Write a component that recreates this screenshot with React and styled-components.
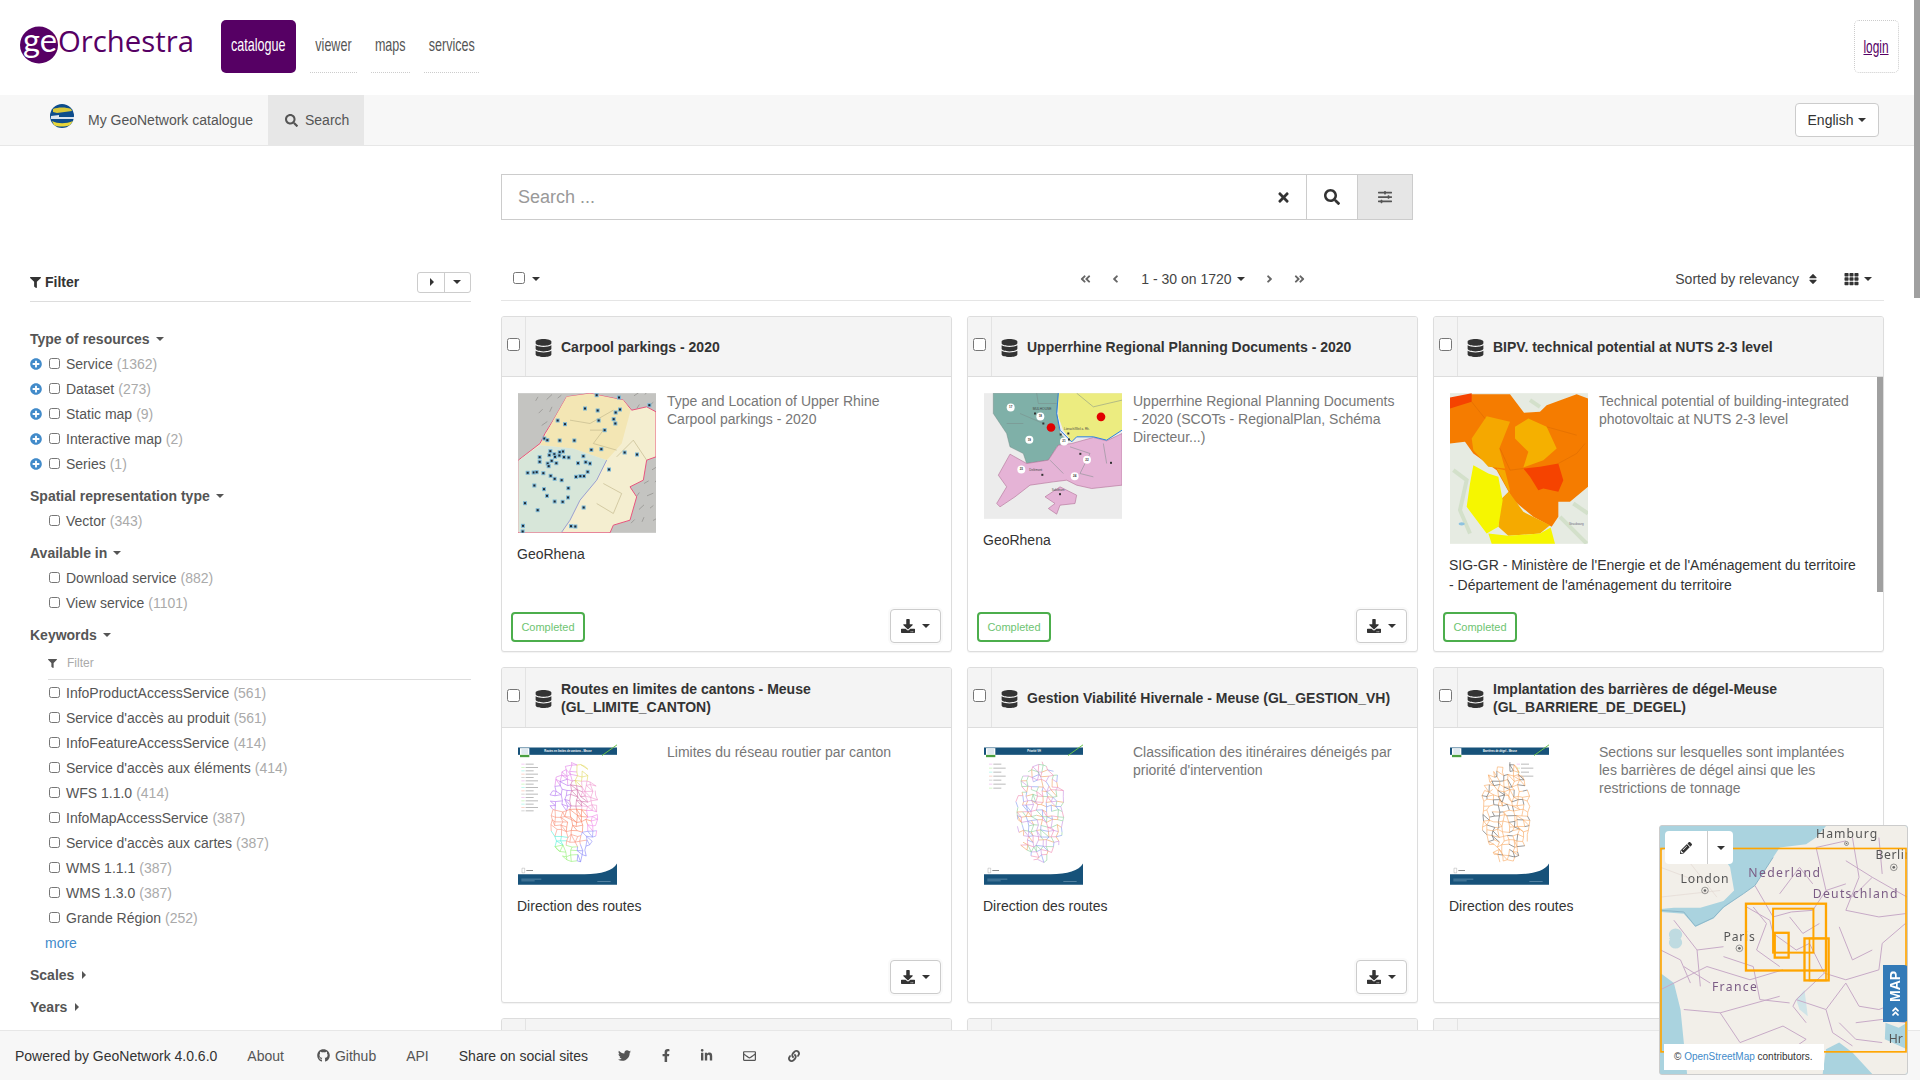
import React from "react";
import styled, { createGlobalStyle } from "styled-components";
import {
  FaAngleDoubleLeft, FaAngleDoubleRight, FaAngleDoubleDown, FaAngleLeft, FaAngleRight, FaDatabase, FaDownload,
  FaFacebookF, FaFilter, FaGithub, FaLink, FaLinkedinIn, FaPencilAlt, FaPlusCircle, FaRegEnvelope, FaSearch,
  FaSlidersH, FaSort, FaTh, FaTimes, FaTwitter,
} from "react-icons/fa";

const Global = createGlobalStyle`
  html, body { margin: 0; padding: 0; height: 100%; overflow: hidden; background: #fff; }
  body { font-family: "Liberation Sans", Arial, sans-serif; font-size: 14px; color: #333; line-height: 20px; }
  * { box-sizing: border-box; }
`;

const Page = styled.div`width: 1914px; height: 1080px; overflow: hidden;`;
const ScrollThumb = styled.div`position: fixed; top: 0; right: 0; width: 6px; height: 298px; background: #a0a0a0;`;

const TopHeader = styled.header`display: flex; align-items: flex-start; height: 95px; padding: 20px 15px 0 20px;`;
const LogoSvg = styled.svg`display: block; width: 180px; height: 56px; flex: none;`;
const TopNav = styled.nav`display: flex; margin-left: 21px; gap: 14px;`;
const TopLink = styled.a`
  display: flex; align-items: center; justify-content: center; height: 53px; padding-bottom: 3px;
  width: ${p => p.$w}px; font-family: "Liberation Sans", sans-serif; font-size: 19px;
  color: ${p => (p.$active ? "#fff" : "#555")};
  background: ${p => (p.$active ? "#560064" : "transparent")};
  border-radius: ${p => (p.$active ? "5px" : "0")};
  border-bottom: ${p => (p.$active ? "none" : "1px dotted #ccc")};
`;
const Squeeze = styled.span`display: inline-block; flex: none; transform: scaleX(.66);`;
const LoginBox = styled.a`
  margin-left: auto; width: 45px; height: 53px; display: flex; align-items: center; justify-content: center;
  border: 1px dotted #ccc; border-radius: 5px; color: #560064; text-decoration: underline;
  font-family: "Liberation Sans", sans-serif; font-size: 18px;
`;

const NavBar = styled.div`
  display: flex; align-items: stretch; height: 51px; background: #f7f7f7; border-bottom: 1px solid #e7e7e7; padding: 0 35px 0 50px;
`;
const Brand = styled.a`display: flex; align-items: center; color: #555; gap: 14px; margin-right: 15px;`;
const GlobeSvg = styled.svg`width: 24px; height: 24px; margin-top: -8px; display: block;`;
const SearchTab = styled.a`
  display: flex; align-items: center; gap: 7px; width: 96px; padding-left: 17px; background: #e7e7e7; color: #555;
`;
const BsButton = styled.button`
  display: inline-flex; align-items: center; justify-content: center; gap: 5px; background: #fff;
  border: 1px solid #ccc; border-radius: 4px; font: 14px "Liberation Sans", sans-serif; color: #333; padding: 0;
`;
const LangButton = styled(BsButton)`margin: 8px 0 0 auto; width: 84px; height: 34px;`;
const Caret = styled.i`
  display: inline-block; width: 0; height: 0; flex: none; border-left: 4px solid transparent; border-right: 4px solid transparent;
  border-top: 4px solid ${p => p.$c || "#333"};
`;
const CaretR = styled.i`
  display: inline-block; width: 0; height: 0; flex: none; border-top: 4px solid transparent; border-bottom: 4px solid transparent;
  border-left: 4px solid ${p => p.$c || "#333"}; margin-left: 2px;
`;

const Main = styled.main`display: flex; gap: 30px; padding: 28px 30px 0;`;
const Aside = styled.aside`width: 441px; flex: none; padding-top: 97px; color: #555;`;
const FilterHead = styled.div`
  display: flex; align-items: center; justify-content: space-between; height: 31px; padding-bottom: 8px; border-bottom: 1px solid #ddd;
  font-weight: bold; color: #333;
`;
const FilterTitle = styled.span`display: flex; align-items: center; gap: 4px;`;
const MiniGroup = styled.div`display: flex; width: 54px; height: 21px; border: 1px solid #ccc; border-radius: 3px;`;
const MiniBtn = styled.span`
  flex: 1; display: flex; align-items: center; justify-content: center;
  & + & { border-left: 1px solid #ccc; }
`;
const Heading = styled.div`
  display: flex; align-items: center; gap: 6px; height: 25px; font-weight: bold; color: #555;
  margin-top: ${p => p.$first ? 24 : 7}px;
`;
const FacetRow = styled.div`display: flex; align-items: center; height: 25px; padding-left: ${p => p.$plus ? 0 : 19}px;`;
const PlusIcon = styled(FaPlusCircle)`width: 12px; height: 12px; color: #428bca; margin-right: 7px; flex: none;`;
const SmallCheck = styled.input.attrs({ type: "checkbox" })`width: 11px; height: 11px; margin: -1px 6px 0 0; flex: none;`;
const Count = styled.span`color: #aaa; margin-left: 4px;`;
const KwFilter = styled.div`
  display: flex; align-items: center; gap: 10px; margin: 2px 0 0 18px; height: 31px; padding-bottom: 2px; border-bottom: 1px solid #ddd;
  font-size: 12px; color: #aaa;
`;
const KwIcon = styled(FaFilter)`width: 9px; height: 9px; color: #555;`;
const MoreLink = styled.a`display: block; height: 24px; line-height: 25px; margin: 1px 0 0 15px; color: #428bca;`;

const Content = styled.section`flex: 1; min-width: 0;`;
const SearchBar = styled.div`display: flex; width: 912px; height: 46px; border: 1px solid #ccc;`;
const SearchInput = styled.input`
  flex: 1; min-width: 0; border: none; outline: none; padding: 0 16px; font: 18px "Liberation Sans", sans-serif; color: #333;
  &::placeholder { color: #999; }
`;
const SearchCell = styled.span`
  display: flex; align-items: center; justify-content: center; flex: none; width: ${p => p.$w}px; color: ${p => p.$fill ? "#555" : "#333"};
  border-left: ${p => p.$line ? "1px solid #ccc" : "none"}; background: ${p => p.$fill ? "#e6e6e6" : "#fff"};
`;
const Toolbar = styled.div`
  display: grid; grid-template-columns: 1fr auto 1fr; align-items: center; height: 39px; margin-top: 42px; padding: 0 12px 4px; border-bottom: 1px solid #e5e5e5;
`;
const ToolLeft = styled.div`display: flex; align-items: center; gap: 7px;`;
const ToolCheck = styled.input.attrs({ type: "checkbox" })`width: 12px; height: 12px; margin: -3px 0 0 0;`;
const Pager = styled.div`display: flex; align-items: center; gap: 19px; color: #444;`;
const PagerIcon = styled.span`display: flex; width: 11px; justify-content: center; color: #666;`;
const PagerText = styled.span`display: flex; align-items: center; gap: 5px; margin-left: 1px;`;
const ToolRight = styled.div`display: flex; align-items: center; justify-content: flex-end; color: #444;`;
const SortIcon = styled(FaSort)`width: 8px; height: 14px; color: #333; margin-left: 10px;`;
const GridIcon = styled(FaTh)`width: 15px; height: 14px; color: #333; margin-left: 27px; margin-right: 5px;`;

const CardGrid = styled.div`display: grid; grid-template-columns: repeat(3, 1fr); column-gap: 15px; row-gap: 15px; margin-top: 15px;`;
const CardBox = styled.article`
  position: relative; display: flex; flex-direction: column; height: 336px; border: 1px solid #ddd; border-radius: 3px;
  box-shadow: 0 1px 1px rgba(0,0,0,.05); background: #fff; overflow: hidden;
`;
const CardHead = styled.div`display: flex; height: 60px; flex: none; background: #f4f4f4; border-bottom: 1px solid #ddd;`;
const CheckCell = styled.div`width: 24px; flex: none; border-right: 1px solid #e3e3e3; padding: 21px 0 0 5px;`;
const CardCheck = styled.input.attrs({ type: "checkbox" })`display: block; width: 13px; height: 13px; margin: 0;`;
const TitleCell = styled.div`display: flex; align-items: center; flex: 1; padding: 0 14px 0 9px; gap: 9px;`;
const DbIcon = styled(FaDatabase)`width: 17px; height: 18px; color: #333; flex: none; margin-top: 2px;`;
const CardTitle = styled.h3`margin: 0; font-size: 14px; line-height: 18px; font-weight: bold; color: #333;`;
const CardBody = styled.div`flex: 1; padding: 16px 17px 0 15px; min-height: 0;`;
const TopPart = styled.div`display: flex; align-items: flex-start; padding-left: 1px;`;
const ThumbCol = styled.div`width: 149px; flex: none;`;
const Desc = styled.p`margin: -1px 0 0; width: 264px; font-size: 14px; line-height: 18px; color: #777;`;
const Author = styled.div`margin-top: 11px; max-width: 412px; line-height: 20px; color: #333;`;
const CardFoot = styled.div`
  display: flex; align-items: flex-end; justify-content: space-between; flex: none; padding: 0 10px 8px 9px; height: 60px;
`;
const Status = styled.span`
  display: inline-flex; align-items: center; justify-content: center; width: 74px; height: 30px; margin-bottom: 1px;
  border: 2px solid #4cae4c; border-radius: 4px; color: #6ec472; font-size: 11px;
`;
const DlButton = styled(BsButton)`margin-left: auto; width: 51px; height: 34px; gap: 7px; box-shadow: 0 0 0 2px #fafafa;`;
const DlIcon = styled(FaDownload)`width: 14px; height: 14px; color: #333;`;
const InnerThumb = styled.div`position: absolute; right: 0; top: 60px; width: 6px; height: 215px; background: #a0a0a0;`;
const ThumbSvg = styled.svg`display: block; width: ${p => p.$w}px; height: ${p => p.$h}px;`;

const Foot = styled.footer`
  position: fixed; left: 0; right: 0; bottom: 0; height: 50px; display: flex; align-items: center; gap: 30px; padding: 0 0 0 15px;
  background: #f7f7f7; border-top: 1px solid #e7e7e7; color: #333;
`;
const FootLink = styled.a`display: flex; align-items: center; gap: 5px; color: #555; margin-left: ${p => p.$ml || 0}px;`;
const FootIcon = styled.a`display: flex; color: #555; width: ${p => p.$w || 14}px; justify-content: center;`;

const MapBox = styled.div`
  position: fixed; left: 1659px; top: 825px; width: 249px; height: 250px; border: 1px solid #ccc; border-radius: 3px; overflow: hidden; background: #aad3df;
`;
const MapSvg = styled.svg`display: block; width: 100%; height: 100%;`;
const EditGroup = styled.div`
  position: absolute; left: 5px; top: 5px; width: 68px; height: 33px; display: flex; background: #fff; border-radius: 4px;
`;
const EditCell = styled.span`
  display: flex; align-items: center; justify-content: center; width: ${p => p.$w}px; flex: none;
  & + & { border-left: 1px solid #ccc; }
`;
const Attribution = styled.div`
  position: absolute; left: 4px; bottom: 4px; width: 160px; height: 26px; display: flex; align-items: center; padding-left: 10px;
  background: #fff; font-size: 10px; color: #333; white-space: pre;
`;
const OsmLink = styled.a`color: #428bca;`;
const MapTab = styled.div`
  position: absolute; right: -1px; top: 139px; width: 25px; height: 57px; background: #337ab7; color: #fff; border-radius: 4px 0 0 4px;
  display: flex; align-items: center; justify-content: center; gap: 4px; font-weight: bold; font-size: 14px;
  writing-mode: vertical-rl; transform: rotate(180deg);
`;

/* ---- drawings ---- */
const Logo = () => (
  <LogoSvg viewBox="0 -6 180 56">
    <ellipse cx="19" cy="19" rx="19" ry="18.5" fill="#560064" />
    <text x="3" y="26" fontFamily="Lato, sans-serif" fontSize="32" fill="#fff" textLength="34" lengthAdjust="spacingAndGlyphs">ge</text>
    <text x="38" y="26" fontFamily="'Open Sans', sans-serif" fontSize="29" fill="#560064" textLength="136" lengthAdjust="spacingAndGlyphs">Orchestra</text>
  </LogoSvg>
);

const Globe = () => (
  <GlobeSvg viewBox="0 0 24 24">
    <circle cx="12" cy="12" r="12" fill="#0d4d8c" />
    <path d="M3 5 C8 3 16 3 21 5 L22 7 L7 9 L3 8Z" fill="#d9c93a" />
    <path d="M1 12 L9 11 L9 13 L24 13 L24 15 L1 15Z" fill="#fff" opacity=".85" />
    <path d="M2 17 C8 20 16 20 23 17 L20 21 C15 23 8 23 4 21Z" fill="#e8d63a" />
  </GlobeSvg>
);

const markers = [[320,45],[387,52],[478,75],[285,85],[323,91],[390,88],[377,97],[203,121],[225,132],[326,121],[371,117],[376,130],[344,150],[163,175],[172,180],[209,181],[253,181],[304,209],[334,207],[404,217],[441,223],[181,213],[193,222],[209,216],[219,214],[178,225],[195,230],[208,226],[222,231],[236,232],[149,231],[149,245],[185,242],[173,250],[176,258],[199,249],[280,228],[264,249],[287,246],[300,250],[357,268],[293,275],[113,278],[131,277],[140,276],[160,279],[182,287],[194,296],[215,300],[258,290],[271,288],[282,288],[133,316],[162,327],[235,324],[171,347],[234,352],[194,364],[218,365],[105,369],[143,390],[281,382],[99,437],[98,454],[243,438],[256,439]];

const hatch = [];
for (let i = 0; i < 90; i++) {
  const x = 84 + ((i * 137) % 414), y = 39 + ((i * 89) % 419);
  hatch.push(`M${x} ${y} l${6 + i % 14} ${-8 - i % 9}`);
}

const ThumbCarpool = () => (
  <ThumbSvg $w={138} $h={140} viewBox="84 39 414 419">
    <rect x="84" y="39" width="414" height="419" fill="#c4c4c1" />
    <path d={hatch.join(" ")} stroke="#a09f9c" strokeWidth="3" fill="none" />
    <path d="M85 240 L150 190 L165 160 L190 120 L230 50 L300 40 L400 60 L425 90 L470 80 L498 95 L498 230 L470 240 L460 300 L420 320 L440 350 L420 420 L370 435 L360 458 L84 458Z" fill="#f4eed0" stroke="#e8557f" strokeWidth="3" />
    <path d="M190 120 L230 50 L300 40 L400 60 L422 90 L395 190 L350 240 L250 205 L150 195Z" fill="#f3e6b4" />
    <path d="M85 242 L150 195 L250 205 L350 240 L320 300 L270 360 L240 420 L215 456 L85 456Z" fill="#d7e6d9" />
    <path d="M350 240 L320 300 L270 360 L240 420 L215 456" stroke="#9a9fd0" strokeWidth="3" fill="none" />
    <path d="M300 150 L340 150 L310 190 L380 210 M380 230 L430 180 L470 240 M340 310 L395 340 L370 400 L320 370 M240 120 L300 130 L370 90" stroke="#c3b88d" strokeWidth="2" fill="none" />
    {markers.map(([x, y], i) => (
      <g key={i}>
        <rect x={x - 6} y={y - 6} width="12" height="12" fill="#7db7d4" />
        <rect x={x - 3} y={y - 3} width="6" height="6" fill="#1e2833" />
      </g>
    ))}
  </ThumbSvg>
);

const circles = [[152,82,"17"],[241,109,"18"],[208,179,"19"],[312,184,"21"],[381,239,"22"],[184,268,"23"],[344,288,"24"]];
const ThumbRegional = () => (
  <ThumbSvg $w={138} $h={126} viewBox="72 39 414 377">
    <rect x="72" y="39" width="414" height="377" fill="#ececec" />
    <path d="M100 39 L295 39 L290 100 L300 160 L320 180 L290 200 L265 240 L200 250 L190 220 L150 200 L140 160 L100 100Z" fill="#7fb0a8" stroke="#6f8a86" strokeWidth="1.5" />
    <path d="M295 39 L486 39 L486 150 L440 180 L400 170 L350 170 L335 185 L310 150 L295 110Z" fill="#ecec80" />
    <path d="M150 222 L200 250 L265 240 L295 195 L335 190 L400 172 L440 182 L486 160 L486 315 L395 325 L350 315 L320 300 L280 305 L210 315 L165 350 L120 380 L110 370 L140 320 L115 285Z" fill="#e5b3d6" stroke="#b77a9f" strokeWidth="2" />
    <path d="M300 320 L350 345 L345 370 L300 375 L290 402 L265 385 L285 370 L255 350Z" fill="#e5b3d6" stroke="#b77a9f" strokeWidth="2" />
    <path d="M295 39 L290 100 L300 150 L335 185 L350 170 L400 170 L440 180 L486 150" stroke="#2a7fe0" strokeWidth="3" fill="none" />
    <path d="M230 39 L235 70 L290 70 M180 100 L250 130 M140 130 L190 130 M330 200 L390 220 L360 280 L400 290 M270 240 L310 280 M430 190 L440 250 M350 39 L400 80 L486 60" stroke="#7b8a88" strokeWidth="1.5" fill="none" />
    {circles.map(([x, y, t]) => (
      <g key={t}>
        <circle cx={x} cy={y} r="12" fill="#fff" />
        <text x={x} y={y + 3} fontSize="9" fontWeight="bold" textAnchor="middle" fontFamily="Liberation Sans, sans-serif" fill="#333">{t}</text>
      </g>
    ))}
    <circle cx="273" cy="142" r="13" fill="#e20000" />
    <circle cx="423" cy="110" r="13" fill="#e20000" />
    {[[225,100],[250,130],[302,163],[325,160],[327,178],[361,221],[453,248],[247,284],[300,342]].map(([x, y], i) => <rect key={i} x={x - 3} y={y - 3} width="6" height="6" fill="#333" />)}
    <text x="218" y="90" fontSize="10" fill="#444" fontFamily="Liberation Sans, sans-serif">MULHOUSE</text>
    <text x="312" y="150" fontSize="9" fill="#444" fontFamily="Liberation Sans, sans-serif">Lörrach/Weil a. Rh.</text>
    <text x="208" y="273" fontSize="9" fill="#444" fontFamily="Liberation Sans, sans-serif">Delémont</text>
    <text x="275" y="333" fontSize="9" fill="#444" fontFamily="Liberation Sans, sans-serif">Solothurn</text>
  </ThumbSvg>
);

const ThumbBipv = () => (
  <ThumbSvg $w={138} $h={151} viewBox="60 69 414 452">
    <rect x="60" y="69" width="414" height="452" fill="#e6ebe2" />
    <path d="M70 300 L110 330 L90 420 L120 490 M300 90 L330 110 M430 400 L474 430 M390 440 L470 520" stroke="#cbdcc0" strokeWidth="12" fill="none" opacity=".7" />
    <ellipse cx="95" cy="461" rx="9" ry="5" fill="#8ec3e0" />
    <path d="M60 95 L125 72 L240 72 L282 128 L330 125 L350 105 L440 72 L474 85 L474 350 L420 395 L385 395 L385 440 L365 470 L310 440 L250 390 L200 300 L130 250 L105 215 L60 220Z" fill="#f57c00" />
    <path d="M170 138 L240 155 L208 235 L225 295 L175 290 L130 240 L125 205Z" fill="#f5a800" />
    <path d="M255 170 L295 145 L350 170 L380 235 L340 270 L280 292 L295 245 L255 205Z" fill="#f5b000" />
    <path d="M200 295 L225 300 L240 360 L210 390 L205 470 L235 497 L330 490 L360 465 L280 425 L240 370Z" fill="#f5aa00" />
    <path d="M130 285 L175 310 L205 320 L218 390 L205 470 L170 490 L125 430 L110 410 L120 340Z" fill="#f6f600" />
    <path d="M175 490 L235 497 L330 490 L362 472 L375 521 L185 521Z" fill="#f6f600" />
    <path d="M280 295 L330 290 L385 280 L400 330 L385 365 L340 355 L325 360 L300 320Z" fill="#f54300" />
    <path d="M60 82 L125 69 L125 95 L60 115Z" fill="#f54300" />
    <path d="M125 95 L165 145 M210 235 L240 300 L280 295 M385 280 L440 250 L465 220 M350 170 L440 195" stroke="#d96a00" strokeWidth="1.5" fill="none" />
    <text x="417" y="464" fontSize="9" fill="#667" fontFamily="Liberation Sans, sans-serif">Strasbourg</text>
  </ThumbSvg>
);

function rng(seed) {
  let s = seed;
  return () => { s = (s * 16807) % 2147483647; return (s - 1) / 2147483646; };
}

function network(seed, colorAt) {
  const r = rng(seed), step = 15, pts = {}, segs = [];
  for (let gy = 0; gy * step < 320; gy++) for (let gx = 0; gx * step < 170; gx++) {
    const x = 85 + gx * step + r() * 10 - 5, y = 50 + gy * step + r() * 10 - 5;
    const dx = (x - 168) / 78, dy = (y - 205) / 155;
    if (dx * dx + dy * dy <= 1) pts[gx + "," + gy] = [x, y];
  }
  Object.keys(pts).forEach(k => {
    const [gx, gy] = k.split(",").map(Number), a = pts[k];
    [[1, 0], [0, 1], [1, 1]].forEach(([ox, oy], i) => {
      const b = pts[(gx + ox) + "," + (gy + oy)];
      if (b && r() < (i === 2 ? 0.3 : 0.85)) segs.push({ a, b, c: colorAt(a[0], a[1], r) });
    });
  });
  return segs;
}

const netA = network(77, (x, y) => {
  if (y < 110) return x < 165 ? "#e080e8" : "#e0d860";
  if (y < 190) return x < 150 ? "#b070f0" : x < 190 ? "#d070a8" : "#f098d0";
  if (y < 260) return x < 145 ? "#f89078" : x < 205 ? "#f88060" : "#f088e8";
  if (y < 300) return x < 140 ? "#50f0d8" : x < 190 ? "#f89078" : "#9090f8";
  return x < 170 ? "#90f070" : "#8080f8";
});
const netB = network(311, (x, y, r) => ["#f088b0", "#8098f0", "#f0a060", "#88d098", "#c890e0"][Math.floor(r() * 5)]);
const netC = network(923, (x, y, r) => (r() < 0.22 ? "#555" : "#f8a860"));

const legendA = [60,70,80,90,100,110,120,130,140,150,160,170,180,190,200];
const Poster = ({ title, net, legendX, legendLines, w = 99 }) => (
  <ThumbSvg $w={w} $h={141} viewBox="0 0 297 422">
    <rect width="297" height="422" fill="#fff" />
    <rect y="10" width="297" height="22" fill="#17527a" />
    <rect x="6" y="12" width="28" height="28" fill="#fff" />
    <path d="M10 14 L30 14 L30 30 L10 30Z" fill="#dfe9f0" />
    <rect x="6" y="32" width="28" height="7" fill="#4a9f40" />
    <text x="150" y="24" textAnchor="middle" fontSize="8" fontWeight="bold" fill="#fff" fontFamily="Liberation Sans, sans-serif">{title}</text>
    <path d="M252 34 L297 2" stroke="#6cc24a" strokeWidth="3" />
    {legendLines.map((y, i) => (
      <g key={i}>
        <path d={`M${legendX} ${y} h10`} stroke={["#e89be8", "#a8f090", "#7ff0e0", "#f8a892", "#aaa"][i % 5]} strokeWidth="1.5" />
        <path d={`M${legendX + 13} ${y} h${24 + (i * 13) % 26}`} stroke="#999" strokeWidth="2" />
      </g>
    ))}
    {net.map((s, i) => <path key={i} d={`M${s.a[0]} ${s.a[1]} L${s.b[0]} ${s.b[1]}`} stroke={s.c} strokeWidth="1.8" />)}
    <path d="M12 372 v14 h8 v-14z" fill="none" stroke="#888" />
    <path d="M25 379 h20" stroke="#555" strokeWidth="2" />
    <path d="M0 422 L297 422 L297 358 C285 380 250 390 200 390 L0 390Z" fill="#17527a" />
    <path d="M10 405 h60 M10 410 h40 M238 412 h40" stroke="#8fb0c8" strokeWidth="1.5" />
  </ThumbSvg>
);

const Bx = ({ x, y, w, h, s = 6 }) => <rect x={x} y={y} width={w} height={h} fill="none" stroke="#ffa500" strokeWidth={s} />;
const borders = [
  "M345 225 L400 320 L455 305 L520 300 L560 240 L530 110 L620 90",
  "M320 290 L390 330 L400 370 L470 420 L510 400 L555 490 L470 570 L460 590 L500 640",
  "M555 490 L620 510 L720 480 L730 400 L800 340",
  "M640 80 L660 200 L620 300 L720 320 L800 310",
  "M470 570 L560 600 L620 520 L660 590 L720 600 L800 570",
  "M560 600 L580 670 L640 710",
  "M650 640 L730 630 L805 640",
  "M60 540 L200 470 L330 510 L430 480 M130 600 L240 610 L300 700 M240 610 L420 560",
  "M100 330 L170 420 L250 410 M170 420 L180 530",
  "M420 250 L480 170 L520 220 M700 200 L805 260 M720 80 L730 190",
  "M300 700 L430 650 L500 690 M400 760 L500 690",
  "M340 290 L380 340 L350 420 L420 470 M450 320 L490 370 L540 340 M600 350 L640 450 L700 420",
  "M250 440 L340 470 L360 570 L450 580 M600 640 L650 690 L730 700 M620 150 L700 200 L640 260",
  "M130 470 L210 520 M60 420 L120 450 L150 520 M560 240 L620 220",
];

const MapLabel = styled.text`font-family: "Noto Sans", sans-serif; font-size: 37px;`;

const MapDrawing = () => (
  <MapSvg viewBox="58 45 747 750" preserveAspectRatio="none">
    <rect x="58" y="45" width="747" height="750" fill="#aad3df" />
    <path d="M60 305 L130 310 L165 350 L220 325 L250 292 L310 250 L345 225 L400 140 L420 110 L500 100 L530 80 L560 45 L805 45 L805 640 L780 655 L740 640 L738 690 L805 720 L805 795 L700 795 L640 730 L600 700 L560 720 L550 795 L140 795 L130 700 L120 600 L100 520 L60 490Z" fill="#f2efe9" />
    <path d="M60 120 L110 100 L180 70 L230 110 L270 170 L282 240 L250 272 L180 292 L100 292 L60 296Z" fill="#f2efe9" />
    <path d="M85 385 a24 22 0 1 0 40 0 a24 22 0 1 0 -40 0" fill="#aad3df" stroke="#f2efe9" strokeWidth="8" opacity=".7" />
    <path d="M470 570 L495 540 L505 620 L480 600Z" fill="#cfe4e8" />
    <path d="M60 170 L180 215 M120 120 L230 260 M60 260 L240 240" stroke="#e2d7d2" strokeWidth="2" fill="none" />
    {borders.map((d, i) => <path key={i} d={d} fill="none" stroke="#c6a9c6" strokeWidth="3" strokeLinejoin="round" />)}
    <path d="M60 300 L130 305 L165 348 L220 322 L250 290 L310 250 L345 225 L400 140" fill="none" stroke="#8cb6c8" strokeWidth="3" />
    <MapLabel x="530" y="81" fill="#555" textLength="185">Hamburg</MapLabel>
    <MapLabel x="710" y="145" fill="#555" textLength="110">Berlin</MapLabel>
    <MapLabel x="120" y="216" fill="#555" textLength="145">London</MapLabel>
    <MapLabel x="250" y="392" fill="#555" textLength="95">Paris</MapLabel>
    <MapLabel x="325" y="200" fill="#7b5c85" textLength="217">Nederland</MapLabel>
    <MapLabel x="520" y="264" fill="#7b5c85" textLength="256">Deutschland</MapLabel>
    <MapLabel x="215" y="545" fill="#7b5c85" textLength="136">France</MapLabel>
    <MapLabel x="750" y="702" fill="#555">Hr</MapLabel>
    {[[622,98,6],[765,170,10],[194,240,10],[298,415,10]].map(([x, y, r], i) => (
      <g key={i}>
        <circle cx={x} cy={y} r={r} fill="none" stroke="#666" strokeWidth="2" />
        <circle cx={x} cy={y} r={r / 2.5} fill="#666" />
      </g>
    ))}
    <Bx x={61} y={113} w={741} h={615} s={5} />
    <Bx x={318} y={280} w={242} h={202} s={7} />
    <Bx x={400} y={295} w={122} h={133} s={6} />
    <Bx x={405} y={368} w={42} h={75} s={7} />
    <Bx x={495} y={385} w={73} h={127} s={7} />
    <Bx x={510} y={385} w={50} h={127} s={5} />
  </MapSvg>
);

/* ---- data ---- */
const facets1 = [["Service", 1362], ["Dataset", 273], ["Static map", 9], ["Interactive map", 2], ["Series", 1]];
const keywords = [["InfoProductAccessService", 561], ["Service d'accès au produit", 561], ["InfoFeatureAccessService", 414], ["Service d'accès aux éléments", 414], ["WFS 1.1.0", 414], ["InfoMapAccessService", 387], ["Service d'accès aux cartes", 387], ["WMS 1.1.1", 387], ["WMS 1.3.0", 387], ["Grande Région", 252]];

const Facet = ({ label, count, plus }) => (
  <FacetRow $plus={plus}>
    {plus && <PlusIcon />}
    <SmallCheck />
    <span>{label}</span>
    <Count>({count})</Count>
  </FacetRow>
);

const Card = ({ title, desc, author, thumb, completed, noButton, inner }) => (
  <CardBox>
    <CardHead>
      <CheckCell><CardCheck /></CheckCell>
      <TitleCell>
        {title && <DbIcon />}
        <CardTitle>{title}</CardTitle>
      </TitleCell>
    </CardHead>
    <CardBody>
      <TopPart>
        <ThumbCol>{thumb}</ThumbCol>
        <Desc>{desc}</Desc>
      </TopPart>
      <Author>{author}</Author>
    </CardBody>
    <CardFoot>
      {completed && <Status>Completed</Status>}
      {!noButton && <DlButton><DlIcon /><Caret /></DlButton>}
    </CardFoot>
    {inner && <InnerThumb />}
  </CardBox>
);

export default function App() {
  return (
    <Page>
      <Global />
      <TopHeader>
        <Logo />
        <TopNav>
          <TopLink $active $w={75}><Squeeze>catalogue</Squeeze></TopLink>
          <TopLink $w={47}><Squeeze>viewer</Squeeze></TopLink>
          <TopLink $w={39}><Squeeze>maps</Squeeze></TopLink>
          <TopLink $w={55}><Squeeze>services</Squeeze></TopLink>
        </TopNav>
        <LoginBox><Squeeze>login</Squeeze></LoginBox>
      </TopHeader>
      <NavBar>
        <Brand><Globe />My GeoNetwork catalogue</Brand>
        <SearchTab><FaSearch size={13} />Search</SearchTab>
        <LangButton>English <Caret /></LangButton>
      </NavBar>
      <Main>
        <Aside>
          <FilterHead>
            <FilterTitle><FaFilter size={11} />Filter</FilterTitle>
            <MiniGroup>
              <MiniBtn><CaretR /></MiniBtn>
              <MiniBtn><Caret /></MiniBtn>
            </MiniGroup>
          </FilterHead>
          <Heading $first>Type of resources <Caret $c="#555" /></Heading>
          {facets1.map(([l, c]) => <Facet key={l} label={l} count={c} plus />)}
          <Heading>Spatial representation type <Caret $c="#555" /></Heading>
          <Facet label="Vector" count={343} />
          <Heading>Available in <Caret $c="#555" /></Heading>
          <Facet label="Download service" count={882} />
          <Facet label="View service" count={1101} />
          <Heading>Keywords <Caret $c="#555" /></Heading>
          <KwFilter><KwIcon />Filter</KwFilter>
          {keywords.map(([l, c]) => <Facet key={l} label={l} count={c} />)}
          <MoreLink>more</MoreLink>
          <Heading>Scales <CaretR $c="#555" /></Heading>
          <Heading>Years <CaretR $c="#555" /></Heading>
        </Aside>
        <Content>
          <SearchBar>
            <SearchInput placeholder="Search ..." readOnly />
            <SearchCell $w={46}><FaTimes size={15} /></SearchCell>
            <SearchCell $w={51} $line><FaSearch size={16} /></SearchCell>
            <SearchCell $w={55} $line $fill><FaSlidersH size={14} /></SearchCell>
          </SearchBar>
          <Toolbar>
            <ToolLeft><ToolCheck /><Caret /></ToolLeft>
            <Pager>
              <PagerIcon><FaAngleDoubleLeft size={12} /></PagerIcon>
              <PagerIcon><FaAngleLeft size={12} /></PagerIcon>
              <PagerText>1 - 30 on 1720 <Caret /></PagerText>
              <PagerIcon><FaAngleRight size={12} /></PagerIcon>
              <PagerIcon><FaAngleDoubleRight size={12} /></PagerIcon>
            </Pager>
            <ToolRight>
              Sorted by relevancy
              <SortIcon />
              <GridIcon />
              <Caret />
            </ToolRight>
          </Toolbar>
          <CardGrid>
            <Card title="Carpool parkings - 2020" desc="Type and Location of Upper Rhine Carpool parkings - 2020" author="GeoRhena" thumb={<ThumbCarpool />} completed />
            <Card title="Upperrhine Regional Planning Documents - 2020" desc="Upperrhine Regional Planning Documents - 2020 (SCOTs - RegionalPlan, Schéma Directeur...)" author="GeoRhena" thumb={<ThumbRegional />} completed />
            <Card title="BIPV. technical potential at NUTS 2-3 level" desc="Technical potential of building-integrated photovoltaic at NUTS 2-3 level" author="SIG-GR - Ministère de l'Energie et de l'Aménagement du territoire - Département de l'aménagement du territoire" thumb={<ThumbBipv />} completed noButton inner />
            <Card title="Routes en limites de cantons - Meuse (GL_LIMITE_CANTON)" desc="Limites du réseau routier par canton" author="Direction des routes" thumb={<Poster title="Routes en limites de cantons - Meuse" net={netA} legendX={10} legendLines={legendA} />} />
            <Card title="Gestion Viabilité Hivernale - Meuse (GL_GESTION_VH)" desc="Classification des itinéraires déneigés par priorité d'intervention" author="Direction des routes" thumb={<Poster title="Priorité VH" net={netB} legendX={15} legendLines={[60,72,84,96,108,120,132]} />} />
            <Card title="Implantation des barrières de dégel-Meuse (GL_BARRIERE_DE_DEGEL)" desc="Sections sur lesquelles sont implantées les barrières de dégel ainsi que les restrictions de tonnage" author="Direction des routes" thumb={<Poster title="Barrières de dégel - Meuse" net={netC} legendX={200} legendLines={[60,72,84,96]} />} noButton />
            <Card />
            <Card />
            <Card />
          </CardGrid>
        </Content>
      </Main>
      <Foot>
        <span>Powered by GeoNetwork 4.0.6.0</span>
        <FootLink>About</FootLink>
        <FootLink $ml={3}><FaGithub size={13} />Github</FootLink>
        <FootLink>API</FootLink>
        <span>Share on social sites</span>
        <FootIcon><FaTwitter size={13} /></FootIcon>
        <FootIcon $w={8}><FaFacebookF size={13} /></FootIcon>
        <FootIcon $w={13}><FaLinkedinIn size={13} /></FootIcon>
        <FootIcon $w={13}><FaRegEnvelope size={14} /></FootIcon>
        <FootIcon $w={16}><FaLink size={12} /></FootIcon>
      </Foot>
      <MapBox>
        <MapDrawing />
        <EditGroup>
          <EditCell $w={42}><FaPencilAlt size={12} /></EditCell>
          <EditCell $w={26}><Caret /></EditCell>
        </EditGroup>
        <Attribution>© <OsmLink>OpenStreetMap</OsmLink> contributors.</Attribution>
        <MapTab><FaAngleDoubleDown size={11} />MAP</MapTab>
      </MapBox>
      <ScrollThumb />
    </Page>
  );
}
